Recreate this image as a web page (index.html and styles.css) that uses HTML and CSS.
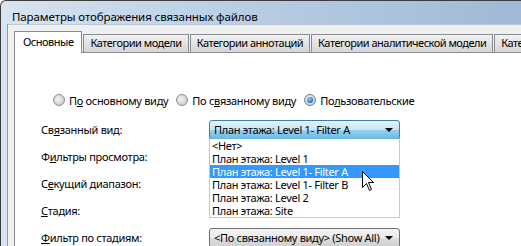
FILE: index.html
```html
<!DOCTYPE html>
<html lang="ru">
<head>
    <meta charset="UTF-8">
    <title>Параметры отображения связанных файлов</title>
    <link rel="stylesheet" href="styles.css">
</head>
<body>
    <div class="window">
        <div class="titlebar">Параметры отображения связанных файлов</div>
        <div class="client">
            <div class="tabs">
                <div class="tab active">Основные</div>
                <div class="tab">Категории модели</div>
                <div class="tab">Категории аннотаций</div>
                <div class="tab">Категории аналитической модели</div>
                <div class="tab">Категории импорта</div>
            </div>
            <div class="panel">
                <div class="radio-row">
                    <label class="radio"><span class="dot"></span><span>П<u>о</u> основному виду</span></label>
                    <label class="radio"><span class="dot"></span><span>По с<u>в</u>язанному виду</span></label>
                    <label class="radio"><span class="dot checked"></span><span>По<u>л</u>ьзовательские</span></label>
                </div>
                <div class="form">
                    <div class="field-label"><span>Св<u>я</u>занный вид:</span></div>
                    <div class="field">
                        <div class="combo open">
                            <span>План этажа: Level 1- Filter A</span>
                            <span class="arrow"></span>
                        </div>
                        <ul class="dropdown">
                            <li>&lt;Нет&gt;</li>
                            <li>План этажа: Level 1</li>
                            <li class="selected">План этажа: Level 1- Filter A</li>
                            <li>План этажа: Level 1- Filter B</li>
                            <li>План этажа: Level 2</li>
                            <li>План этажа: Site</li>
                        </ul>
                        <svg class="cursor" width="13" height="21" viewBox="0 0 13 21">
                            <path d="M0.5 0.5 L0.5 16.5 L4.5 12.5 L7.5 19.5 L9.5 18.5 L6.5 11.5 L11.5 11.5 Z" fill="#fff" stroke="#000" stroke-width="1"/>
                        </svg>
                    </div>
                    <div class="field-label"><span>Ф<u>и</u>льтры просмотра:</span></div>
                    <div class="field"></div>
                    <div class="field-label"><span>С<u>е</u>кущий диапазон:</span></div>
                    <div class="field"></div>
                    <div class="field-label"><span><u>С</u>тадия:</span></div>
                    <div class="field"></div>
                    <div class="field-label"><span><u>Ф</u>ильтр по стадиям:</span></div>
                    <div class="field">
                        <div class="combo">
                            <span>&lt;По связанному виду&gt; (Show All)</span>
                            <span class="arrow"></span>
                        </div>
                    </div>
                </div>
            </div>
        </div>
    </div>
</body>
</html>
```

FILE: styles.css
```css
* {
    margin: 0;
    padding: 0;
    box-sizing: border-box;
}

body {
    width: 521px;
    height: 246px;
    overflow: hidden;
    font-family: 'Noto Sans', 'Liberation Sans', sans-serif;
    font-size: 11px;
    letter-spacing: -0.3px;
    color: #000;
    background: #fff;
}

.window {
    height: 246px;
    border-top: 1px solid #3d3d3d;
    border-left: 1px solid #3d3d3d;
    border-top-left-radius: 6px;
    background: linear-gradient(90deg, #d9e4ef 0%, #bcd0e6 40%, #9fb9d6 100%);
    display: flex;
    flex-direction: column;
    overflow: hidden;
}

.titlebar {
    height: 29px;
    padding: 8px 0 0 11px;
    font-size: 11.5px;
    letter-spacing: -0.1px;
    color: #000;
    white-space: nowrap;
}

.client {
    flex: 1;
    margin-left: 6px;
    border-left: 1px solid #8b9cb2;
    border-top: 1px solid #b9c9da;
    background: #f0f0f0;
    padding: 6px 0 0 6px;
    display: flex;
    flex-direction: column;
}

.tabs {
    display: flex;
    align-items: flex-end;
    height: 21px;
    white-space: nowrap;
    position: relative;
    z-index: 1;
    letter-spacing: -0.5px;
}

.tab {
    height: 18px;
    padding: 0 6px;
    margin-right: 1px;
    line-height: 16px;
    border: 1px solid #898c95;
    border-bottom: none;
    background: linear-gradient(#f2f2f2, #e3e3e3 50%, #d6d6d6);
}

.tab.active {
    height: 22px;
    margin-bottom: -1px;
    padding: 0 8px;
    line-height: 20px;
    background: #fff;
}

.panel {
    flex: 1;
    background: #fff;
    border: 1px solid #898c95;
    border-right: none;
    border-bottom: none;
    padding-left: 26px;
}

.radio-row {
    display: flex;
    gap: 8px;
    margin: 39px 0 0 12px;
    height: 16px;
    align-items: center;
}

.radio {
    display: flex;
    align-items: center;
    gap: 4px;
    white-space: nowrap;
}

.dot {
    width: 12px;
    height: 12px;
    border-radius: 50%;
    border: 1px solid #8d8d8d;
    background: radial-gradient(circle at 40% 40%, #f4f4f4, #d0d0d0 70%, #bdbdbd);
    position: relative;
}

.dot.checked {
    border-color: #5f86a8;
}

.dot.checked::after {
    content: '';
    position: absolute;
    left: 2px;
    top: 2px;
    width: 6px;
    height: 6px;
    border-radius: 50%;
    background: radial-gradient(circle at 40% 35%, #8fd4ff, #1b6fb8 70%, #0a4f8c);
}

.form {
    display: grid;
    grid-template-columns: 168px 191px;
    grid-auto-rows: 27px;
    margin-top: 8px;
}

.field-label {
    display: flex;
    align-items: center;
    white-space: nowrap;
}

.field {
    position: relative;
    display: flex;
    align-items: center;
}

.combo {
    width: 191px;
    height: 20px;
    border: 1px solid #707070;
    border-radius: 3px;
    padding: 0 6px 0 4px;
    display: flex;
    align-items: center;
    justify-content: space-between;
    background: linear-gradient(#f2f2f2, #ebebeb 50%, #dddddd 51%, #cfcfcf);
    white-space: nowrap;
}

.combo.open {
    border-color: #3c7fb1;
    background: linear-gradient(#e5f4fc, #c4e5f6 50%, #98d1ef 51%, #6ab7e3);
}

.arrow {
    width: 0;
    height: 0;
    border-left: 4px solid transparent;
    border-right: 4px solid transparent;
    border-top: 4px solid #000;
}

.dropdown {
    position: absolute;
    left: 0;
    top: 23px;
    width: 191px;
    list-style: none;
    background: #fff;
    border: 1px solid #c6c9d0;
    border-top: none;
    z-index: 2;
}

.dropdown li {
    height: 13px;
    line-height: 13px;
    padding-left: 2px;
    white-space: nowrap;
}

.dropdown li.selected {
    background: #3399ff;
    color: #fff;
}

.cursor {
    position: absolute;
    left: 153px;
    top: 55px;
    z-index: 3;
}
```
